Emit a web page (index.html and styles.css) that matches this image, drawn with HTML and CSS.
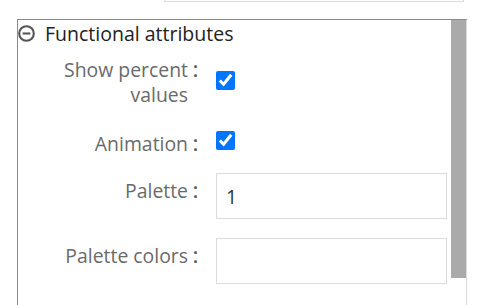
FILE: index.html
```html
<!DOCTYPE html>
<html>
<head>
<meta charset="utf-8">
<link rel="stylesheet" href="styles.css">
</head>
<body>
<div class="prev-input"></div>
<div class="panel">
  <div class="content">
    <div class="header">
      <svg class="toggle" width="17" height="17" viewBox="0 0 17 17"><circle cx="8.5" cy="8.5" r="7.3" fill="none" stroke="#555" stroke-width="2.1"/><line x1="4.6" y1="8.5" x2="12.4" y2="8.5" stroke="#555" stroke-width="2.1"/></svg>
      <span class="title">Functional attributes</span>
    </div>
    <div class="row row-1">
      <label class="label">Show percent values</label>
      <span class="colon">：</span>
      <input type="checkbox" class="check check-1" checked>
    </div>
    <div class="row row-2">
      <label class="label">Animation</label>
      <span class="colon">：</span>
      <input type="checkbox" class="check" checked>
    </div>
    <div class="row row-3">
      <label class="label label-input">Palette</label>
      <span class="colon colon-input">：</span>
      <input type="text" class="field" value="1">
    </div>
    <div class="row row-4">
      <label class="label label-input">Palette colors</label>
      <span class="colon colon-input">：</span>
      <input type="text" class="field" value="">
    </div>
  </div>
  <div class="scrollbar"><div class="thumb"></div></div>
</div>
</body>
</html>
```
FILE: styles.css
```css
html, body {
  margin: 0;
  padding: 0;
  background: #fff;
  overflow: hidden;
}
body {
  font-family: "Open Sans", "Noto Sans", sans-serif;
  font-size: 19.4px;
  line-height: 25px;
  width: 499px;
  height: 305px;
}
.prev-input {
  box-sizing: border-box;
  margin-left: 164px;
  width: 300px;
  height: 22px;
  margin-top: -20px;
  border: 1px solid #dcdcdc;
}
.panel {
  display: flex;
  box-sizing: border-box;
  margin-top: 17px;
  margin-left: 17px;
  width: 450px;
  height: 290px;
  border-top: 1px solid #8a8a8a;
  border-left: 1px solid #8a8a8a;
}
.content {
  flex: 1;
}
.scrollbar {
  width: 15px;
  border-right: 1px solid #dcdcdc;
}
.thumb {
  height: 258px;
  background: #aaaaaa;
}
.header {
  display: flex;
  align-items: center;
  height: 25px;
  margin-top: 0.5px;
}
.toggle {
  display: block;
  margin-top: 1px;
}
.title {
  margin-left: 10px;
  font-size: 19.5px;
  color: #222;
}
.row {
  display: flex;
  align-items: flex-start;
}
.row-1 { margin-top: 11.5px; }
.row-2 { margin-top: 24px; }
.row-3 { margin-top: 16.5px; }
.row-4 { margin-top: 19px; }
.label {
  width: 140px;
  margin-left: 30px;
  text-align: right;
  color: #6a6a6a;
}
.colon {
  width: 15px;
  padding-left: 3px;
  color: #555;
  font-family: "Noto Sans CJK SC", sans-serif;
  font-size: 18px;
}
.label-input, .colon-input {
  margin-top: 5px;
}
.check {
  width: 19px;
  height: 19px;
  margin: 0 0 0 10px;
  accent-color: #0075ff;
}
.check-1 {
  margin-top: 13.5px;
}
.field {
  box-sizing: border-box;
  width: 231px;
  height: 46px;
  margin: 0 0 0 10px;
  border: 1px solid #dcdcdc;
  border-radius: 0;
  padding: 2px 9px 0;
  font-family: "Open Sans", sans-serif;
  font-size: 19.4px;
  color: #333;
  outline: none;
}
```
